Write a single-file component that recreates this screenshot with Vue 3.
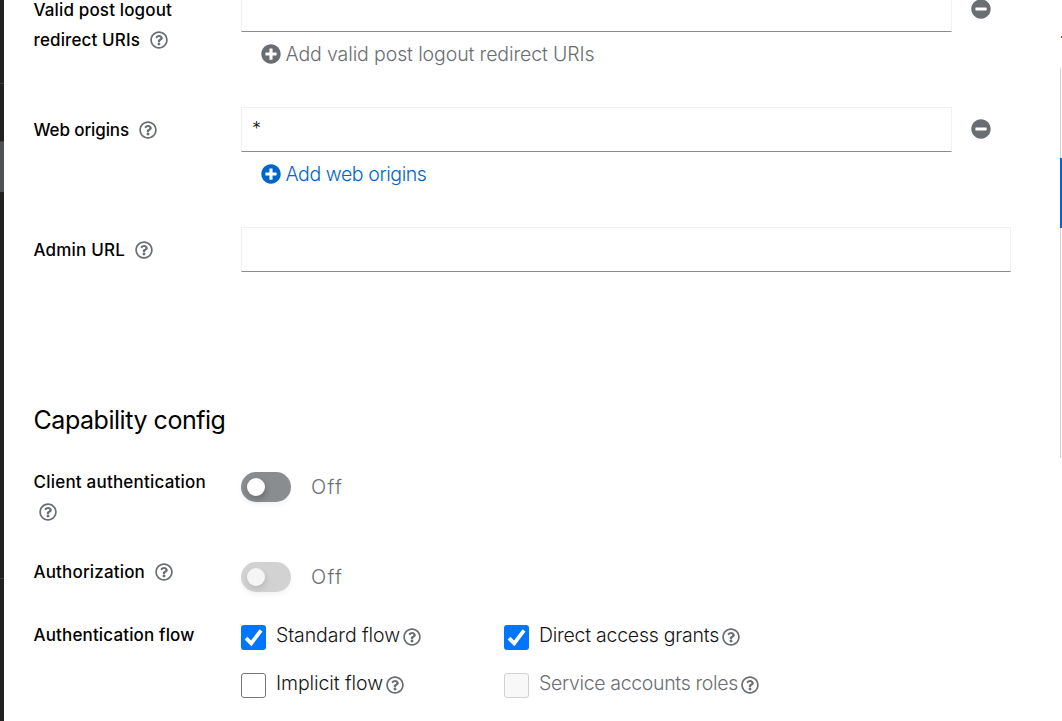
<script setup>
import { h } from 'vue'

const paths = {
  help: 'M256 8C119.043 8 8 119.083 8 256c0 136.997 111.043 248 248 248s248-111.003 248-248C504 119.083 392.957 8 256 8zm0 448c-110.532 0-200-89.431-200-200 0-110.495 89.472-200 200-200 110.491 0 200 89.471 200 200 0 110.53-89.431 200-200 200zm107.244-255.2c0 67.052-72.421 68.084-72.421 92.863V300c0 6.627-5.373 12-12 12h-45.647c-6.627 0-12-5.373-12-12v-8.659c0-35.745 27.1-50.034 47.579-61.516 17.561-9.845 28.324-16.541 28.324-29.579 0-17.246-21.999-28.693-39.784-28.693-23.189 0-33.894 10.977-48.942 29.969-4.057 5.12-11.46 6.071-16.666 2.124l-27.824-21.098c-5.107-3.872-6.251-11.066-2.644-16.363C184.846 131.491 214.94 112 261.794 112c49.071 0 101.45 38.304 101.45 88.8zM298 368c0 23.159-18.841 42-42 42s-42-18.841-42-42 18.841-42 42-42 42 18.841 42 42z',
  plus: 'M256 8C119 8 8 119 8 256s111 248 248 248 248-111 248-248S393 8 256 8zm144 276c0 6.6-5.4 12-12 12h-92v92c0 6.6-5.4 12-12 12h-56c-6.6 0-12-5.4-12-12v-92h-92c-6.6 0-12-5.4-12-12v-56c0-6.6 5.4-12 12-12h92v-92c0-6.6 5.4-12 12-12h56c6.6 0 12 5.4 12 12v92h92c6.6 0 12 5.4 12 12v56z',
  minus: 'M256 8C119 8 8 119 8 256s111 248 248 248 248-111 248-248S393 8 256 8zM124 296c-6.6 0-12-5.4-12-12v-56c0-6.6 5.4-12 12-12h264c6.6 0 12 5.4 12 12v56c0 6.6-5.4 12-12 12H124z'
}

const Icon = (props) =>
  h('svg', { viewBox: '0 0 512 512', 'aria-hidden': 'true' }, [h('path', { d: paths[props.name], fill: 'currentColor' })])
Icon.props = ['name']

// Tracks a single line of text out to the given width in pixels.
const vFit = {
  mounted(el, { value }) {
    const natural = el.getBoundingClientRect().width
    el.style.letterSpacing = `${(value - natural) / el.textContent.length}px`
  }
}

const flows = [
  { text: 'Standard flow', width: 124, checked: true },
  { text: 'Direct access grants', width: 180, checked: true },
  { text: 'Implicit flow', width: 107 },
  { text: 'Service accounts roles', width: 199, disabled: true }
]
</script>

<template>
  <div class="page">
    <aside class="sidebar"><i class="rule first"></i><i class="current"></i><i class="rule second"></i></aside>
    <main class="content">
      <section class="rows">
        <div class="row">
          <div class="label"><span v-fit="138.5">Valid post logout</span><br /><span v-fit="106.5">redirect URIs</span><Icon name="help" class="help" /></div>
          <div class="control">
            <div class="entry"><div class="input"></div><Icon name="minus" class="remove" /></div>
            <div class="add muted"><Icon name="plus" /><span v-fit="309">Add valid post logout redirect URIs</span></div>
          </div>
        </div>
        <div class="row">
          <div class="label"><span v-fit="95.5">Web origins</span><Icon name="help" class="help" /></div>
          <div class="control">
            <div class="entry"><div class="input">*</div><Icon name="minus" class="remove" /></div>
            <div class="add"><Icon name="plus" /><span v-fit="141">Add web origins</span></div>
          </div>
        </div>
        <div class="row">
          <div class="label"><span v-fit="91.5">Admin URL</span><Icon name="help" class="help" /></div>
          <div class="control"><div class="input"></div></div>
        </div>
      </section>
      <h1><span v-fit="192">Capability config</span></h1>
      <div class="row toggle-row">
        <div class="label"><span v-fit="172.5">Client authentication</span><br /><Icon name="help" class="help wrapped" /></div>
        <div class="toggle"><span class="switch"></span><span v-fit="32">Off</span></div>
      </div>
      <div class="row toggle-row short">
        <div class="label"><span v-fit="111.5">Authorization</span><Icon name="help" class="help" /></div>
        <div class="toggle"><span class="switch disabled"></span><span v-fit="32">Off</span></div>
      </div>
      <div class="row">
        <div class="label flow-label"><span v-fit="161">Authentication flow</span></div>
        <div class="flows">
          <div v-for="f in flows" :key="f.text" class="flow" :class="{ disabled: f.disabled }">
            <span class="box" :class="{ checked: f.checked }">
              <svg v-if="f.checked" viewBox="0 0 25 25"><path d="M5 13.2l5.2 5.2L20 5.4" fill="none" stroke="#fff" stroke-width="3.8" /></svg>
            </span>
            <span v-fit="f.width" class="flow-text">{{ f.text }}</span>
            <Icon name="help" class="flow-help" />
          </div>
        </div>
      </div>
    </main>
    <nav class="jump"><span class="clipped"></span><span class="rail"><i></i></span></nav>
  </div>
</template>

<style>
body { margin: 0; overflow: hidden; }
</style>

<style scoped>
* { box-sizing: border-box; }
.page { display: flex; width: 1062px; height: 721px; overflow: hidden; background: #fff; color: #000; font-family: Inter, "Liberation Sans", sans-serif; }
.sidebar { display: flex; flex-direction: column; flex: none; width: 4px; background: #212121; }
.rule { flex: none; height: 1px; background: #3c3f42; }
.rule.first { margin-top: 83px; }
.current { flex: none; height: 51px; margin-top: 57px; background: #4f5255; border-top: 1px solid #3c3f42; }
.rule.second { margin-top: 386px; }
.content { flex: none; width: 1056px; padding-left: 30px; }
.rows { margin-top: -13px; }
.row { display: grid; grid-template-columns: 207px 770px; }
.rows .row { height: 120px; }
.label { padding-top: 8px; margin-left: -0.5px; font-size: 17px; font-weight: 500; line-height: 30px; white-space: nowrap; }
.help { width: 18px; height: 18px; margin-left: 10px; vertical-align: -3px; color: #6a6e73; }
.help.wrapped { margin-left: 5px; }
.entry { display: flex; align-items: center; }
.input { flex: 1; height: 45px; padding: 6px 10px; border: 1px solid #f0f0f0; border-bottom-color: #8a8d90; color: #151515; font-size: 18px; font-weight: 300; line-height: 30px; }
.remove { flex: none; width: 20px; height: 20px; margin: 0 20px 2px; color: #6a6e73; }
.entry .input { margin-right: -1px; }
.add { display: flex; align-items: center; gap: 4.5px; height: 30px; margin: 7px 0 0 20px; color: #06c; font-size: 19.5px; font-weight: 300; white-space: nowrap; }
.add svg { width: 20px; height: 20px; }
.add.muted { color: #6a6e73; }
h1 { margin: 56px 0 0 -0.5px; font-size: 25px; font-weight: 400; line-height: 34px; white-space: nowrap; }
.toggle-row { height: 90px; margin-top: 30px; }
.toggle-row .label { padding-top: 0; }
.toggle-row.short { height: 63px; margin-top: 0; }
.toggle { display: flex; align-items: center; gap: 20px; height: 30px; margin-top: 5px; color: #6a6e73; font-size: 20px; font-weight: 300; }
.switch { display: flex; align-items: center; width: 50px; height: 30px; padding-left: 6px; border-radius: 15px; background: #8a8d90; box-shadow: 0 3px 5px #0000000c; }
.switch::before { content: ''; width: 18px; height: 18px; border-radius: 50%; background: #fff; box-shadow: 1px 3px 6px #0000003d; }
.switch.disabled { background: #d2d2d2; }
.switch.disabled::before { background: #f5f5f5; box-shadow: 1px 3px 6px #00000020; }
.label.flow-label { padding-top: 0; }
.flows { display: grid; grid-template-columns: 263px 1fr; grid-auto-rows: 48px; }
.flow { display: flex; align-items: flex-start; color: #151515; font-size: 19.5px; font-weight: 300; line-height: 30px; white-space: nowrap; }
.box { flex: none; width: 25px; height: 25px; margin: 5px 10px 0 0; border: 1px solid #767676; border-radius: 3px; }
.box.checked { border: 0; background: #0075ff; }
.box svg { display: block; }
.flow-help { width: 18px; height: 18px; margin: 8px 0 0 3px; color: #6a6e73; }
.flow.disabled { color: #6a6e73; }
.disabled .box { border-color: #d1d1d1; background: #f8f8f8; }
.jump { flex: none; display: flex; flex-direction: column; width: 2px; margin-top: 36px; }
.clipped { width: 1px; height: 2px; margin-left: 1px; background: #8b4a20; }
.rail { height: 390px; margin-top: 30px; border-left: 1px solid #d2d2d2; }
.rail i { display: block; width: 2px; height: 70px; margin: 90px 0 0 -1px; background: #06c; }
</style>
